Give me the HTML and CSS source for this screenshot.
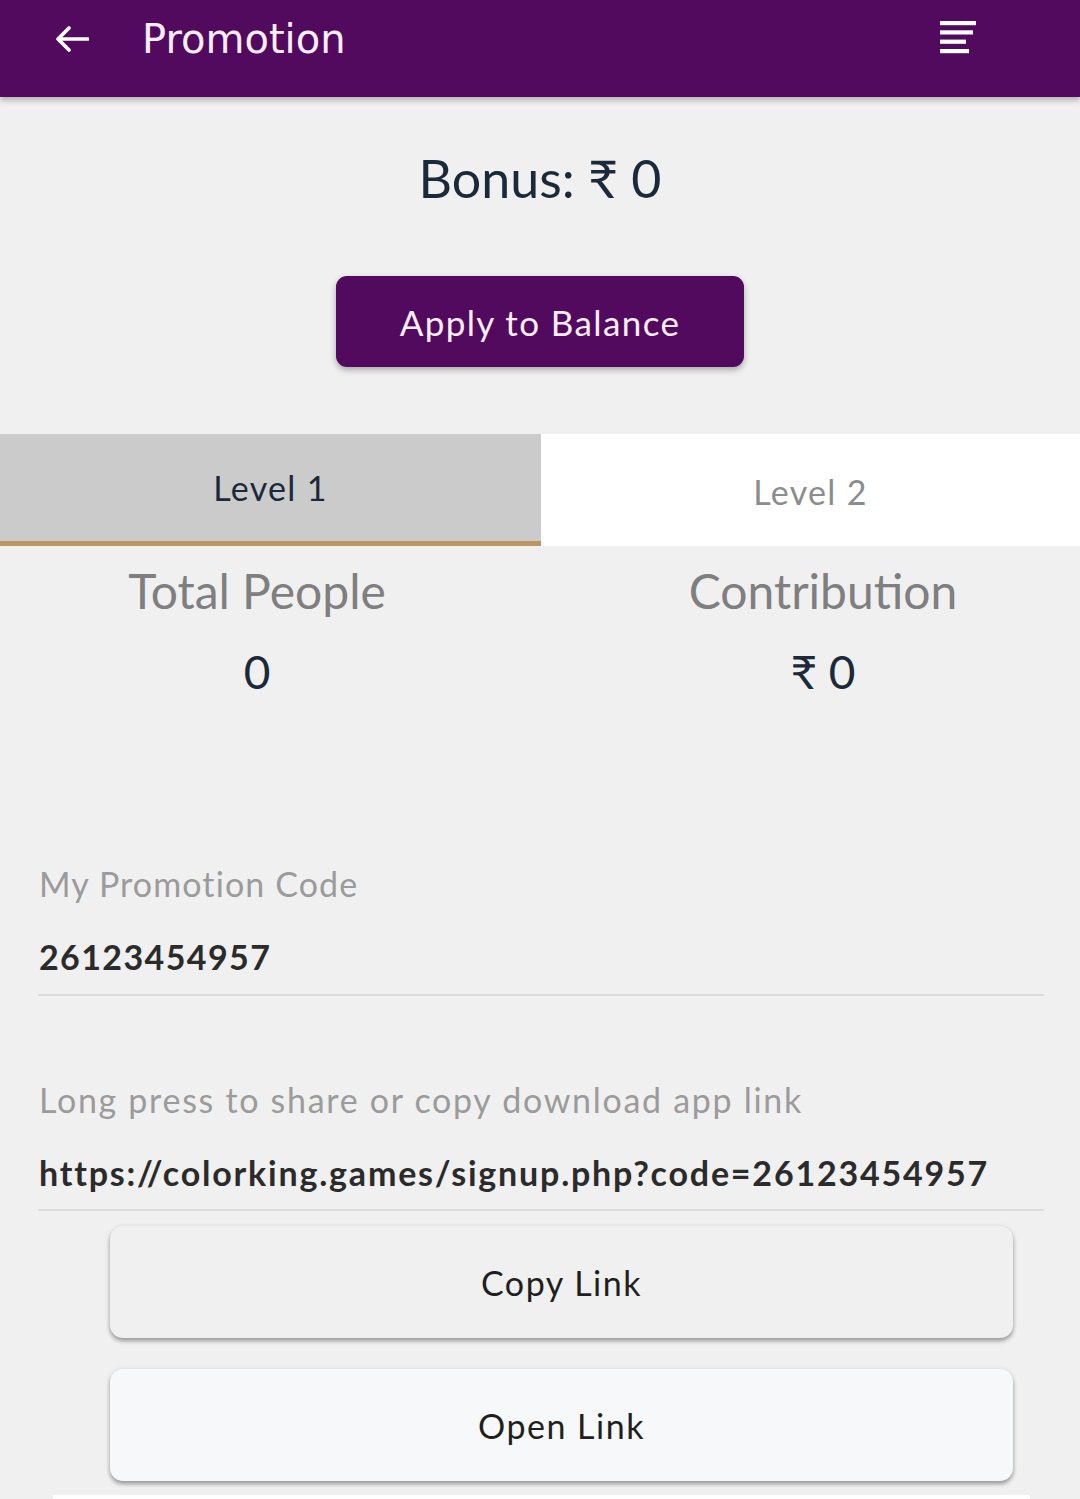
FILE: index.html
```html
<!DOCTYPE html>
<html>
<head>
<meta charset="utf-8">
<link rel="stylesheet" href="styles.css">
</head>
<body>
<header class="topbar">
  <svg class="back" width="34" height="26" viewBox="0 0 34 26"><path d="M33 13H3M14 2L3 13l11 11" fill="none" stroke="#fff" stroke-width="3.6" stroke-linecap="round" stroke-linejoin="round"/></svg>
  <div class="title">Promotion</div>
  <svg class="menu" width="38" height="36" viewBox="0 0 38 36"><rect x="0" y="0" width="36" height="4.2" fill="#fff"/><rect x="0" y="9.3" width="33" height="4.2" fill="#fff"/><rect x="0" y="18.6" width="26" height="4.2" fill="#fff"/><rect x="0" y="28" width="29" height="4.2" fill="#fff"/></svg>
</header>

<main class="page">
  <div class="bonus">Bonus: ₹ 0</div>
  <button class="apply">Apply to Balance</button>

  <div class="tabs">
    <div class="tab active">Level 1</div>
    <div class="tab">Level 2</div>
  </div>

  <div class="stats">
    <div class="stat">
      <div class="stat-label">Total People</div>
      <div class="stat-value">0</div>
    </div>
    <div class="stat">
      <div class="stat-label">Contribution</div>
      <div class="stat-value">₹ 0</div>
    </div>
  </div>

  <div class="field first">
    <div class="field-label">My Promotion Code</div>
    <div class="field-value">26123454957</div>
  </div>
  <div class="field second">
    <div class="field-label wide">Long press to share or copy download app link</div>
    <div class="field-value wide">https://colorking.games/signup.php?code=26123454957</div>
  </div>

  <div class="actions">
    <button class="action copy">Copy Link</button>
    <button class="action open">Open Link</button>
  </div>
  <div class="bottom-card"></div>
</main>
</body>
</html>
```
FILE: styles.css
```css
* { box-sizing: border-box; }
html, body { margin: 0; padding: 0; }
body {
  background: #f0f0f0;
  font-family: "Lato", "Noto Sans", "DejaVu Sans", sans-serif;
  width: 1080px;
  height: 1499px;
  overflow: hidden;
}
.topbar {
  height: 97px;
  background: #520a5e;
  display: flex;
  align-items: center;
  padding-left: 55px;
  box-shadow: 0 3px 6px rgba(0,0,0,0.28);
  position: relative;
  z-index: 2;
}
.back { margin-top: -19px; flex: none; }
.title {
  font-family: "DejaVu Sans", "Noto Sans", sans-serif;
  font-size: 40px;
  color: #fbeefc;
  margin-left: 53px;
  margin-top: -20px;
  flex: 1;
}
.menu { margin-right: 102px; margin-top: -19px; flex: none; }

.page { display: flex; flex-direction: column; align-items: center; }

.bonus {
  margin-top: 50px;
  font-size: 52px;
  line-height: 62px;
  color: #1b2a3a;
}
.apply {
  margin-top: 67px;
  width: 408px;
  height: 91px;
  border: none;
  border-radius: 11px;
  background: #520a5e;
  color: #fdeefc;
  font-family: "Lato", "Noto Sans", sans-serif;
  font-size: 35px;
  letter-spacing: 1.4px;
  box-shadow: 0 3px 6px rgba(0,0,0,0.3);
}
.tabs {
  margin-top: 67px;
  width: 1080px;
  display: grid;
  grid-template-columns: 541px 539px;
  height: 112px;
}
.tab {
  display: flex;
  align-items: center;
  justify-content: center;
  background: #ffffff;
  color: #8a8c8f;
  font-size: 34px;
  letter-spacing: 1.3px;
  padding-top: 2px;
}
.tab.active {
  background: #cbcbcb;
  color: #1b2a3a;
  border-bottom: 5px solid #bc9660;
  padding-top: 0;
}
.stats {
  width: 1080px;
  display: grid;
  grid-template-columns: 514px 514px;
  column-gap: 52px;
  padding-top: 17px;
}
.stat { display: flex; flex-direction: column; align-items: center; }
.stat-label {
  font-size: 48px;
  line-height: 56px;
  color: #7f7f7f;
}
.stat-value {
  margin-top: 25px;
  font-size: 46px;
  line-height: 56px;
  color: #1b2a3a;
}
.field {
  align-self: stretch;
  margin: 0 36px 0 38px;
  border-bottom: 2px solid #dcdcdc;
  padding-left: 1px;
}
.field.first { margin-top: 164px; padding-bottom: 17px; }
.field.second { margin-top: 84px; padding-bottom: 16px; }
.field-label {
  font-size: 34px;
  line-height: 40px;
  color: #9b9b9b;
  letter-spacing: 1.1px;
}
.field-value {
  margin-top: 33px;
  font-size: 34px;
  line-height: 40px;
  font-weight: 700;
  color: #2b2b2b;
  letter-spacing: 1.4px;
}
.field-label.wide { letter-spacing: 1.7px; }
.field-value.wide { letter-spacing: 1.8px; }
.actions {
  margin-top: 15px;
  display: flex;
  flex-direction: column;
  gap: 31px;
  margin-left: 43px;
}
.action {
  width: 903px;
  height: 112px;
  border: none;
  border-radius: 13px;
  font-family: "Lato", "Noto Sans", sans-serif;
  font-size: 34px;
  letter-spacing: 1.5px;
  color: #1f1f1f;
  box-shadow: 0 3px 4px rgba(0,0,0,0.35), 0 0 6px rgba(0,0,0,0.06);
}
.copy { background: #f0f0f0; }
.open { background: #f7f8fa; }
.bottom-card {
  margin-top: 14px;
  width: 977px;
  margin-left: 3px;
  height: 20px;
  background: #fff;
}
```
